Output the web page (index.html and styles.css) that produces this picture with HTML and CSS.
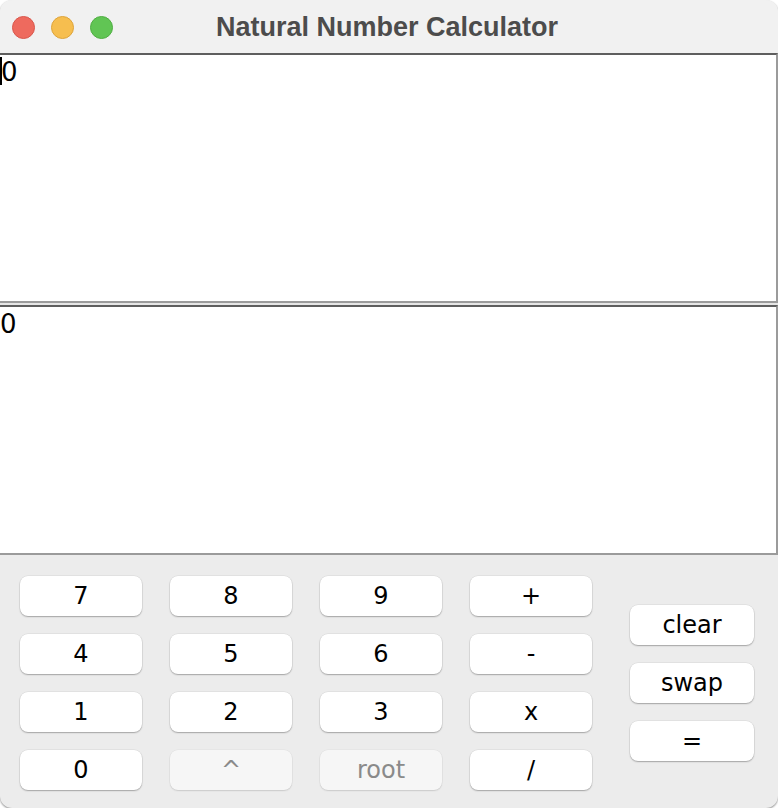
FILE: index.html
```html
<!DOCTYPE html>
<html>
<head>
<meta charset="utf-8">
<link rel="stylesheet" href="styles.css">
</head>
<body>
<div class="window">
  <div class="titlebar">
    <div class="lights">
      <span class="light red"></span>
      <span class="light yellow"></span>
      <span class="light green"></span>
    </div>
    <div class="title">Natural Number Calculator</div>
    <div></div>
  </div>
  <div class="area"><span class="caret"></span>0</div>
  <div class="sep"></div>
  <div class="area">0</div>
  <div class="panel">
    <div class="keys">
      <button class="btn">7</button>
      <button class="btn">8</button>
      <button class="btn">9</button>
      <button class="btn">+</button>
      <button class="btn">4</button>
      <button class="btn">5</button>
      <button class="btn">6</button>
      <button class="btn">-</button>
      <button class="btn">1</button>
      <button class="btn">2</button>
      <button class="btn">3</button>
      <button class="btn">x</button>
      <button class="btn">0</button>
      <button class="btn disabled">^</button>
      <button class="btn disabled">root</button>
      <button class="btn">/</button>
    </div>
    <div class="side">
      <button class="btn wide">clear</button>
      <button class="btn wide">swap</button>
      <button class="btn wide">=</button>
    </div>
  </div>
</div>
</body>
</html>
```
FILE: styles.css
```css
html, body {
  margin: 0;
  padding: 0;
  background: #ffffff;
}
.window {
  width: 778px;
  height: 808px;
  border-radius: 12px;
  background: #ececec;
  overflow: hidden;
  box-shadow: 0 1px 2px rgba(0,0,0,0.45);
  display: flex;
  flex-direction: column;
}
.titlebar {
  height: 53px;
  flex: none;
  background: #f1f1f1;
  display: grid;
  grid-template-columns: 1fr auto 1fr;
  align-items: center;
}
.lights {
  display: flex;
  gap: 16px;
  padding-left: 12px;
  padding-top: 1px;
}
.light {
  width: 23px;
  height: 23px;
  border-radius: 50%;
  box-sizing: border-box;
}
.red { background: #ee6a5e; border: 1px solid #d9574c; }
.yellow { background: #f6be4f; border: 1px solid #dea43a; }
.green { background: #61c554; border: 1px solid #4fae42; }
.title {
  font-family: "Liberation Sans", Arial, sans-serif;
  font-weight: bold;
  font-size: 27px;
  color: #4c4c4c;
  padding-top: 1px;
  margin-left: -4px;
}
.area {
  height: 244px;
  flex: none;
  background: #ffffff;
  border-top: 2px solid #5e5e5e;
  border-bottom: 2px solid #9b9b9b;
  border-right: 2px solid #9b9b9b;
  font-family: "DejaVu Sans", sans-serif;
  font-size: 26px;
  line-height: 30px;
  padding-top: 2px;
  color: #000;
  display: flex;
  align-items: flex-start;
}
.caret {
  width: 2px;
  height: 28px;
  background: #000;
  margin-right: -1px;
}
.sep {
  height: 2px;
  flex: none;
  background: #e6e6e6;
}
.panel {
  flex: 1;
  display: flex;
  align-items: center;
  padding: 2px 0 0 20px;
  gap: 38px;
}
.keys {
  display: grid;
  grid-template-columns: repeat(4, 122px);
  grid-auto-rows: 40px;
  column-gap: 28px;
  row-gap: 18px;
}
.side {
  display: flex;
  flex-direction: column;
  gap: 18px;
}
.btn {
  height: 40px;
  border: none;
  border-radius: 8px;
  background: #ffffff;
  box-shadow: 0 1px 1.5px rgba(0,0,0,0.28), 0 0 0 0.5px rgba(0,0,0,0.08);
  font-family: "DejaVu Sans", sans-serif;
  font-size: 24px;
  color: #000;
  padding: 0;
  margin: 0;
}
.wide { width: 124px; }
.disabled {
  background: #f6f6f6;
  color: #8a8a8a;
  box-shadow: 0 1px 1.5px rgba(0,0,0,0.12), 0 0 0 0.5px rgba(0,0,0,0.05);
}
```
